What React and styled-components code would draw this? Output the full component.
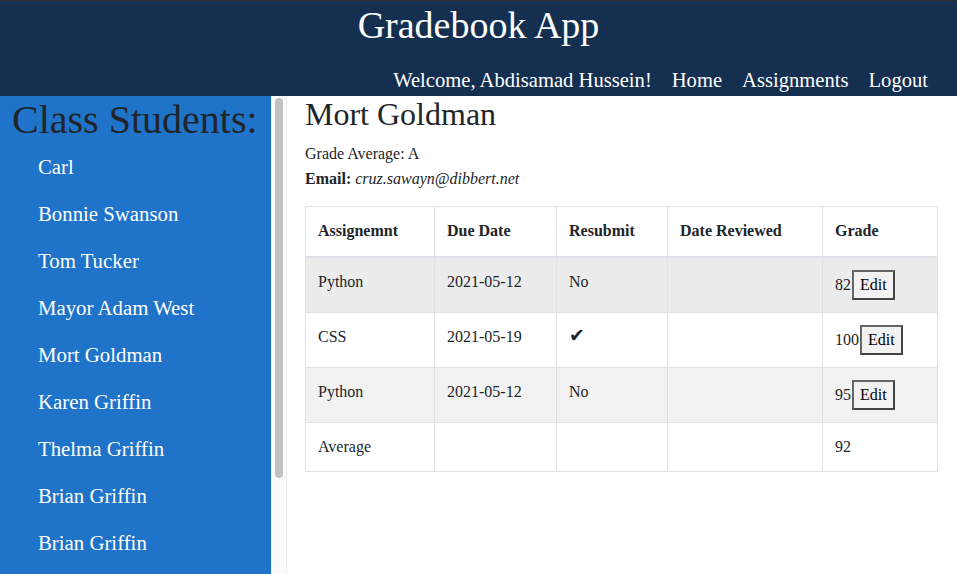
import React from 'react';
import styled, { createGlobalStyle } from 'styled-components';

/* ─── Global ───────────────────────────────────────────────────── */
const GlobalStyle = createGlobalStyle`
  * { box-sizing: border-box; }
  html, body {
    margin: 0;
    height: 100%;
    overflow: hidden;
    font-family: "Liberation Serif", "Times New Roman", serif;
    color: #212529;
    background: #fff;
  }
  #root { height: 100%; }
`;

/* ─── Layout ───────────────────────────────────────────────────── */
const PageWrap = styled.div`
  height: 100vh;
  display: flex;
  flex-direction: column;
`;

const TopBar = styled.header`
  flex-shrink: 0;
  height: 96px;
  background: #152f51;
  border-top: 1px solid #2e2e2e;
  display: flex;
  flex-direction: column;
  color: #fff;
`;

const AppTitle = styled.h1`
  margin: 0;
  padding-top: 3px;
  text-align: center;
  font-size: 38px;
  font-weight: normal;
  line-height: 42px;
`;

const Nav = styled.nav`
  margin-top: auto;
  display: flex;
  justify-content: flex-end;
  gap: 20px;
  padding: 0 29px 4px 0;
  font-size: 20.6px;
  line-height: 24px;
`;

const NavLink = styled.a`
  color: #fff;
  text-decoration: none;
`;

const Body = styled.div`
  flex: 1;
  min-height: 0;
  display: flex;
`;

/* ─── Sidebar ──────────────────────────────────────────────────── */
const Sidebar = styled.aside`
  width: 287px;
  flex-shrink: 0;
  display: flex;
  border-right: 1px solid #ececec;
`;

const SidebarInner = styled.div`
  width: 271px;
  flex-shrink: 0;
  overflow: hidden;
  background: #1f73c9;
`;

const ScrollTrack = styled.div`
  width: 15px;
  background: #fafafa;
  border-left: 1px solid #efefef;
  padding: 2px 0 0 3px;
`;

const ScrollThumb = styled.div`
  width: 8px;
  height: 380px;
  border-radius: 4px;
  background: #c1c1c1;
`;

const SidebarTitle = styled.h2`
  margin: 0;
  padding-left: 12px;
  font-size: 40px;
  font-weight: normal;
  line-height: 48px;
  color: #212529;
  white-space: nowrap;
`;

const StudentList = styled.ul`
  list-style: none;
  margin: 0;
  padding: 0 0 0 38px;
`;

const StudentItem = styled.li`
  padding: 11px 0 12px;
  font-size: 20.8px;
  line-height: 24px;
  color: #fff;
`;

/* ─── Main ─────────────────────────────────────────────────────── */
const Main = styled.main`
  flex: 1;
  min-width: 0;
  padding: 0 20px 0 18px;
`;

const StudentName = styled.h2`
  margin: 0 0 9px;
  font-size: 32px;
  font-weight: normal;
  line-height: 37px;
`;

const InfoLine = styled.p`
  margin: 0 0 1px;
  font-size: 16px;
  line-height: 24px;
`;

const Table = styled.table`
  margin-top: 15px;
  width: 632px;
  border-collapse: collapse;
  font-size: 16px;
  line-height: 24px;
  table-layout: fixed;
`;

const Th = styled.th`
  width: ${({ $w }) => $w}px;
  text-align: left;
  font-weight: bold;
  padding: 12px;
  height: 50px;
  border: 1px solid #dee2e6;
  border-bottom-width: 2px;
`;

const Tr = styled.tr`
  background: ${({ $bg }) => $bg || '#fff'};
`;

const Td = styled.td`
  padding: 12px;
  border: 1px solid #dee2e6;
  vertical-align: top;
`;

const Check = styled.span`
  font-family: "DejaVu Sans", sans-serif;
  font-size: 19px;
  line-height: 20px;
  color: #212529;
`;

const EditButton = styled.button`
  font-family: "Liberation Serif", "Times New Roman", serif;
  font-size: 16px;
  line-height: 22px;
  color: #000;
  background: #f2f2f2;
  border: 2px solid #444;
  border-top-color: #666;
  border-left-color: #666;
  padding: 2px 6px;
  margin: 0 0 0 1px;
  cursor: pointer;
`;

/* ─── Data ─────────────────────────────────────────────────────── */
const students = [
  'Carl', 'Bonnie Swanson', 'Tom Tucker', 'Mayor Adam West', 'Mort Goldman',
  'Karen Griffin', 'Thelma Griffin', 'Brian Griffin', 'Brian Griffin',
];

const grades = [
  { name: 'Python', due: '2021-05-12', resubmit: 'No', grade: 82, bg: '#ececec' },
  { name: 'CSS', due: '2021-05-19', resubmit: 'check', grade: 100, bg: '#fff' },
  { name: 'Python', due: '2021-05-12', resubmit: 'No', grade: 95, bg: '#f2f2f2' },
];

const columns = [
  ['Assignemnt', 129], ['Due Date', 122], ['Resubmit', 111], ['Date Reviewed', 155], ['Grade', 115],
];

export default function App() {
  return (
    <PageWrap>
      <GlobalStyle />
      <TopBar>
        <AppTitle>Gradebook App</AppTitle>
        <Nav>
          <NavLink>Welcome, Abdisamad Hussein!</NavLink>
          <NavLink>Home</NavLink>
          <NavLink>Assignments</NavLink>
          <NavLink>Logout</NavLink>
        </Nav>
      </TopBar>
      <Body>
        <Sidebar>
          <SidebarInner>
            <SidebarTitle>Class Students:</SidebarTitle>
            <StudentList>
              {students.map((s, i) => <StudentItem key={i}>{s}</StudentItem>)}
            </StudentList>
          </SidebarInner>
          <ScrollTrack>
            <ScrollThumb />
          </ScrollTrack>
        </Sidebar>
        <Main>
          <StudentName>Mort Goldman</StudentName>
          <InfoLine>Grade Average: A</InfoLine>
          <InfoLine><b>Email:</b> <i>cruz.sawayn@dibbert.net</i></InfoLine>
          <Table>
            <thead>
              <tr>
                {columns.map(([c, w]) => <Th key={c} $w={w}>{c}</Th>)}
              </tr>
            </thead>
            <tbody>
              {grades.map((g, i) => (
                <Tr key={i} $bg={g.bg}>
                  <Td>{g.name}</Td>
                  <Td>{g.due}</Td>
                  <Td>{g.resubmit === 'check' ? <Check>✔</Check> : g.resubmit}</Td>
                  <Td />
                  <Td>{g.grade}<EditButton>Edit</EditButton></Td>
                </Tr>
              ))}
              <Tr>
                <Td>Average</Td>
                <Td />
                <Td />
                <Td />
                <Td>92</Td>
              </Tr>
            </tbody>
          </Table>
        </Main>
      </Body>
    </PageWrap>
  );
}
